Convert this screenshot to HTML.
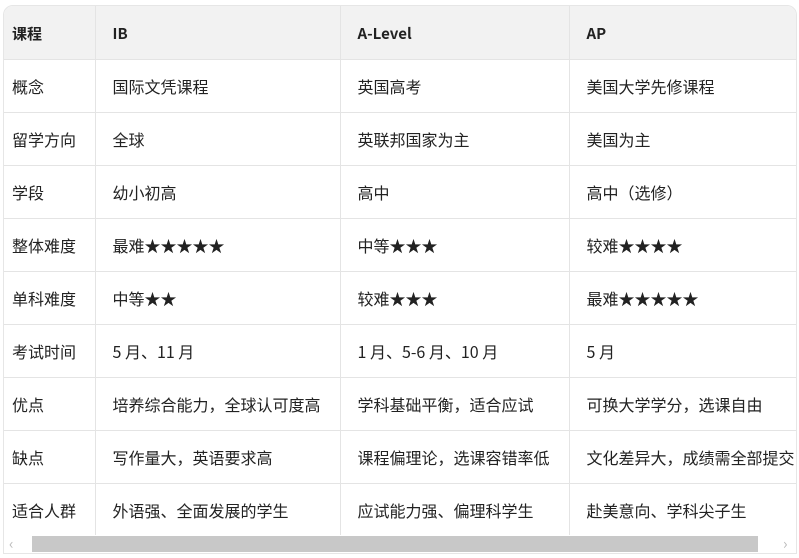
<!DOCTYPE html>
<html><head><meta charset="utf-8"><style>
body{margin:0;background:#fff;width:799px;height:558px;overflow:hidden;font-family:"Noto Sans CJK SC","Liberation Sans",sans-serif;}
.wrap{position:absolute;left:3px;top:5px;width:792px;height:547px;border:1px solid #e6e6e6;border-radius:10px 10px 0 0;overflow:hidden;background:#fff;}
table{border-collapse:collapse;position:absolute;left:0;top:0;table-layout:fixed;width:880px;}
td{height:52px;border-right:1px solid #e4e4e4;border-bottom:1px solid #e4e4e4;font-size:16px;color:#222;padding:0 0 0 17px;white-space:nowrap;overflow:hidden;vertical-align:middle;line-height:20px;}
td:first-child{padding-left:8px;}
tr:first-child td{background:#f2f2f2;font-weight:bold;height:51px;padding-top:2px;font-size:15px;}
tr:last-child td{border-bottom:none;}
.sb{position:absolute;left:0;top:529px;width:792px;height:18px;background:#fff;}
.th{position:absolute;left:28px;top:1px;width:726px;height:16px;background:#c8c8c8;}
.a{position:absolute;top:-2px;font-size:15px;color:#bbb;}
</style></head><body>
<div class="wrap">
<table>
<colgroup><col style="width:91px"><col style="width:245px"><col style="width:229px"><col style="width:315px"></colgroup>
<tr><td>课程</td><td>IB</td><td>A-Level</td><td>AP</td></tr>
<tr><td>概念</td><td>国际文凭课程</td><td>英国高考</td><td>美国大学先修课程</td></tr>
<tr><td>留学方向</td><td>全球</td><td>英联邦国家为主</td><td>美国为主</td></tr>
<tr><td>学段</td><td>幼小初高</td><td>高中</td><td>高中（选修）</td></tr>
<tr><td>整体难度</td><td>最难★★★★★</td><td>中等★★★</td><td>较难★★★★</td></tr>
<tr><td>单科难度</td><td>中等★★</td><td>较难★★★</td><td>最难★★★★★</td></tr>
<tr><td>考试时间</td><td>5 月、11 月</td><td>1 月、5-6 月、10 月</td><td>5 月</td></tr>
<tr><td>优点</td><td>培养综合能力，全球认可度高</td><td>学科基础平衡，适合应试</td><td>可换大学学分，选课自由</td></tr>
<tr><td>缺点</td><td>写作量大，英语要求高</td><td>课程偏理论，选课容错率低</td><td>文化差异大，成绩需全部提交</td></tr>
<tr><td>适合人群</td><td>外语强、全面发展的学生</td><td>应试能力强、偏理科学生</td><td>赴美意向、学科尖子生</td></tr>
</table>
<div class="sb"><span class="a" style="left:5px">&lsaquo;</span><div class="th"></div><span class="a" style="left:779px">&rsaquo;</span></div>
</div>
</body></html>
